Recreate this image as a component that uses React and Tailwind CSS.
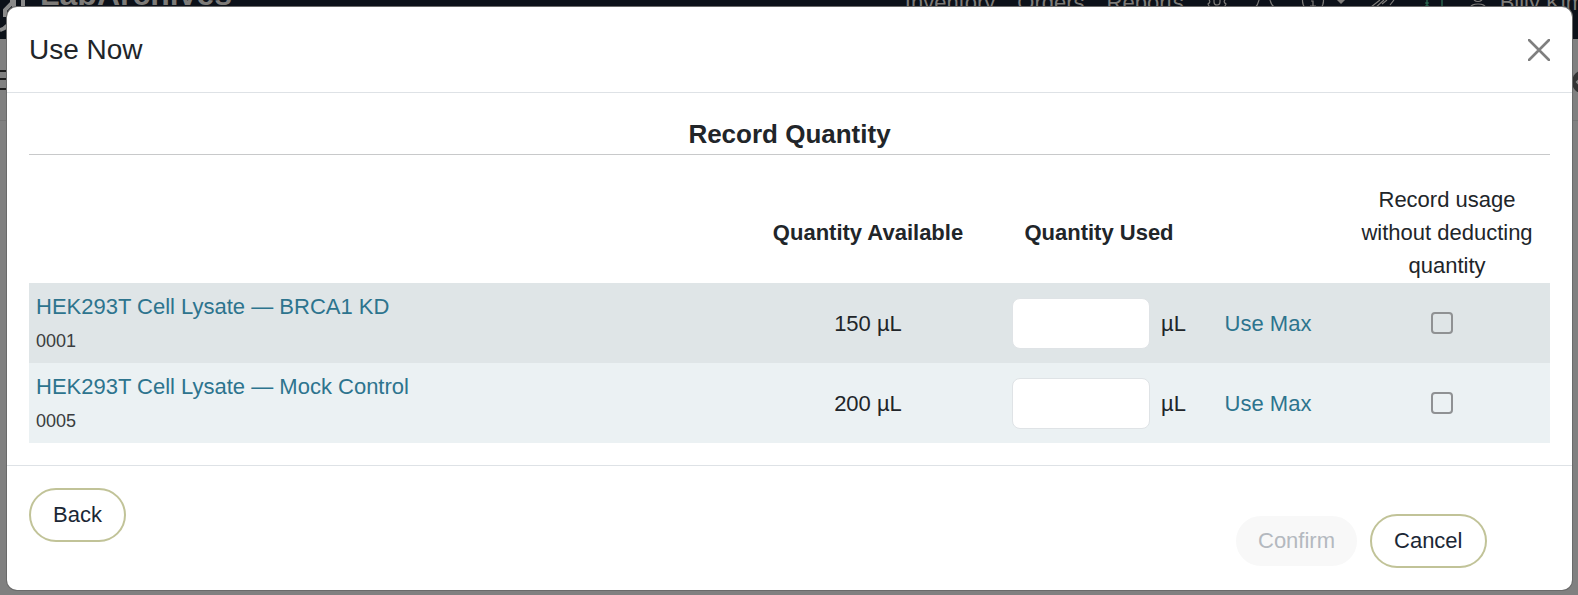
import React from "react";

const items = [
  { id: "0001", name: "HEK293T Cell Lysate — BRCA1 KD", available: "150 µL" },
  { id: "0005", name: "HEK293T Cell Lysate — Mock Control", available: "200 µL" },
];

function PillButton({ children, ...props }) {
  return (
    <button
      type="button"
      className="rounded-full border-2 border-[#c1c398] bg-white px-[22px] py-2 leading-[34px] text-[#1b2735] disabled:border-white disabled:bg-[#f8f8f8] disabled:text-[#b4b9bf]"
      {...props}
    >
      {children}
    </button>
  );
}

function NavIcons() {
  return (
    <svg className="h-[39px] w-[272px] overflow-visible" viewBox="0 0 272 39" fill="none" stroke="currentColor">
      {/* people */}
      <path d="M3 0Q5 2 2 4L4 8M19 0Q17 2 20 4L18 8M8 0V2Q8 5 11 5Q14 5 14 2V0" strokeWidth="1.2" />
      {/* bell */}
      <path d="M53 0Q52 5 49 8M64 0Q65 5 69 8" strokeWidth="1.2" />
      {/* info */}
      <circle cx="107" cy="1" r="10.5" strokeWidth="1.2" />
      <path d="M105 1H107V6M104 6H110" strokeWidth="1.2" />
      <path d="M131 0H139L135 4Z" fill="currentColor" stroke="none" />
      {/* rocket */}
      <path d="M165 7L174 0M169 8L178 0M176 4L181 0M184 5L188 0" strokeWidth="1.2" />
      {/* tour */}
      <path d="M221 0V8M236 0V8" stroke="#2f7558" strokeWidth="1.2" />
      <path d="M219 3H223M219 6H223" stroke="#2f7558" />
      {/* user */}
      <path d="M268 0Q272 3 276 0M264 8Q265 4 272 4Q279 4 280 8" strokeWidth="1.2" />
    </svg>
  );
}

function PageBehind() {
  return (
    <div className="absolute inset-0 overflow-hidden bg-[#808080]" aria-hidden="true">
      <div className="flex h-[39px] justify-between overflow-hidden bg-[#0c1119] text-[#7d7b78]">
        <div className="flex items-start">
          <svg className="h-[39px] w-[40px]" viewBox="0 0 40 39" fill="none" stroke="#8a8a8a">
            <path d="M5 17V10L12 3V0M14 0V8M23 0V8" strokeWidth="4" />
            <path d="M0 30Q8 28 12 18" strokeWidth="4" />
          </svg>
          <span className="-mt-6 text-[32px] leading-[36px] font-bold">LabArchives</span>
        </div>
        <div className="-mr-1.5 flex items-start gap-[22px] leading-[33px]">
          <span className="-mt-3.5">Inventory</span>
          <span className="-mt-3.5">Orders</span>
          <span className="-mt-3.5">Reports</span>
          <NavIcons />
          <span className="-mt-3.5 whitespace-nowrap">Billy Kim</span>
        </div>
      </div>
      <div className="flex h-[82px] items-center justify-between border-b border-[#757575]">
        <svg className="h-[22px] w-[8px]" viewBox="0 0 8 22" stroke="#1c1c1c" strokeWidth="2">
          <path d="M0 2H8M0 10H8M0 20H8" />
        </svg>
        <svg className="-mr-[18px] size-6" viewBox="0 0 24 24" fill="none">
          <circle cx="12" cy="14" r="12" fill="#333" />
          <path d="M9 10L5 14L9 18" stroke="#8a8a8a" strokeWidth="2" />
        </svg>
      </div>
    </div>
  );
}

function QuantityTable() {
  return (
    <table className="w-full table-fixed">
      <thead>
        <tr className="leading-[33px]">
          <th aria-label="Item" />
          <th className="w-[276px] px-[7px] pb-px font-bold">Quantity Available</th>
          <th className="w-[186px] pb-px font-bold">Quantity Used</th>
          <th className="w-[152px]" aria-label="Use max" />
          <th className="w-[206px] px-[7px] pb-px font-normal">
            Record usage without deducting quantity
          </th>
        </tr>
      </thead>
      <tbody>
        {items.map((item) => (
          <tr key={item.id} className="text-center odd:bg-[#dfe5e7] even:bg-[#ebf1f3]">
            <td className="px-[7px] pt-[7px] pb-1 text-left">
              <a href="#" className="block leading-[33px] text-[#2d748e]">
                {item.name}
              </a>
              <div className="text-[18px] leading-[36px] text-[#3a3d40]">{item.id}</div>
            </td>
            <td>{item.available}</td>
            <td>
              <label className="flex items-center justify-center gap-[11px]">
                <input
                  type="text"
                  aria-label={`Quantity used, ${item.name}`}
                  className="h-[51px] w-[138px] rounded-lg border border-[#dfe3e6] bg-white px-4"
                />
                µL
              </label>
            </td>
            <td>
              <a href="#" className="text-[#2d748e]">
                Use Max
              </a>
            </td>
            <td className="pr-[10px]">
              <input
                type="checkbox"
                aria-label={`Record usage without deducting quantity, ${item.name}`}
                className="mx-auto block size-[22px] appearance-none rounded border-2 border-[#8f9193]"
              />
            </td>
          </tr>
        ))}
      </tbody>
    </table>
  );
}

function App() {
  return (
    <div className="relative min-h-screen pt-[7px] pr-[6px] pb-[5px] pl-[7px] font-['Liberation_Sans',Arial,sans-serif] text-[22px] text-[#212529]">
      <PageBehind />
      <div
        role="dialog"
        aria-labelledby="use-now-title"
        className="relative rounded-[10px] bg-white shadow-[0_0_0_1px_#6a6a6a]"
      >
        <header className="flex items-center justify-between border-b border-[#dee2e6] p-[22px]">
          <h1 id="use-now-title" className="text-[28px] leading-[41px]">
            Use Now
          </h1>
          <button type="button" aria-label="Close" className="text-[#7f7f7f]">
            <svg className="size-[22px]" viewBox="0 0 22 22" fill="none" stroke="currentColor">
              <path d="M1 1L21 21M21 1L1 21" strokeWidth="2.6" strokeLinecap="round" />
            </svg>
          </button>
        </header>
        <main className="p-[22px]">
          <h2 className="mb-7 border-b border-[#c8c9ca] text-center text-[26px] leading-[39px] font-bold">
            Record Quantity
          </h2>
          <QuantityTable />
        </main>
        <footer className="flex items-start justify-between border-t border-[#dee2e6] p-[22px]">
          <PillButton>Back</PillButton>
          <div className="mt-[26px] flex w-[316px] gap-[11px]">
            <PillButton disabled>Confirm</PillButton>
            <PillButton>Cancel</PillButton>
          </div>
        </footer>
      </div>
    </div>
  );
}

export default App;
